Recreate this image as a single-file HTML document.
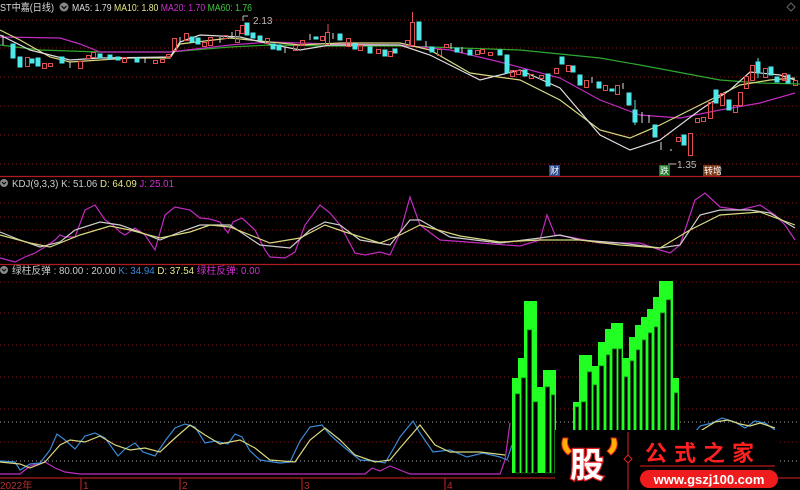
<!DOCTYPE html>
<html><head><meta charset="utf-8"><style>
html,body{margin:0;padding:0;background:#000;width:800px;height:490px;overflow:hidden}
svg{display:block}
text{font-family:"Liberation Sans","Noto Sans CJK SC",sans-serif}
</style></head><body>
<svg width="800" height="490" viewBox="0 0 800 490" xmlns="http://www.w3.org/2000/svg">
<rect width="800" height="490" fill="#000"/>
<g stroke="#801818" stroke-width="1" stroke-dasharray="1,3">
<line x1="0" y1="20" x2="800" y2="20"/><line x1="0" y1="48" x2="800" y2="48"/><line x1="0" y1="77" x2="800" y2="77"/><line x1="0" y1="106" x2="800" y2="106"/><line x1="0" y1="135" x2="800" y2="135"/><line x1="0" y1="164" x2="800" y2="164"/>
<line x1="0" y1="203" x2="800" y2="203"/><line x1="0" y1="217" x2="800" y2="217"/><line x1="0" y1="230" x2="800" y2="230"/><line x1="0" y1="243" x2="800" y2="243"/><line x1="0" y1="255" x2="800" y2="255"/>
<line x1="0" y1="282" x2="800" y2="282"/><line x1="0" y1="313" x2="800" y2="313"/><line x1="0" y1="345" x2="800" y2="345"/><line x1="0" y1="377" x2="800" y2="377"/><line x1="0" y1="409" x2="800" y2="409"/><line x1="0" y1="442" x2="800" y2="442"/>
</g>
<g stroke="#aaa" stroke-width="1" stroke-dasharray="1,3"><line x1="0" y1="422" x2="800" y2="422"/><line x1="0" y1="461" x2="800" y2="461"/></g>
<g stroke="#b01c1c" stroke-width="1.2"><line x1="0" y1="176.5" x2="800" y2="176.5"/><line x1="0" y1="264.5" x2="800" y2="264.5"/><line x1="0" y1="478" x2="800" y2="478"/>
<line x1="81" y1="478" x2="81" y2="490"/><line x1="180" y1="478" x2="180" y2="490"/><line x1="302" y1="478" x2="302" y2="490"/><line x1="445" y1="478" x2="445" y2="490"/></g>

<!-- header texts -->
<text x="0" y="11" font-size="10" fill="#ddd" textLength="54" lengthAdjust="spacingAndGlyphs">ST中嘉(日线)</text>
<circle cx="64" cy="7" r="4.5" fill="#888"/><path d="M61.5 6l2.5 2.5 2.5-2.5" stroke="#000" fill="none" stroke-width="1.2"/>
<text x="72" y="11" font-size="10" textLength="180" lengthAdjust="spacingAndGlyphs"><tspan fill="#ddd">MA5: 1.79 </tspan><tspan fill="#e6e68a">MA10: 1.80 </tspan><tspan fill="#d030d0">MA20: 1.70 </tspan><tspan fill="#3ec83e">MA60: 1.76</tspan></text>
<path d="M791 3l4 4-4 4-4-4z" stroke="#666" fill="none"/>

<!-- MAs -->
<g fill="none" stroke-width="1.2">
<polyline stroke="#2fa82f" points="0,45 40,50 100,52 170,52 230,47 270,45 330,46 400,46 520,50 600,58 640,65 720,80 760,83 800,84"/>
<polyline stroke="#c02cc0" points="0,37 60,38 80,44 100,52 170,52 230,45 270,42 330,44 400,45 450,50 500,62 560,78 600,100 640,115 680,118 720,110 760,103 795,93"/>
<polyline stroke="#d8d880" points="0,30 20,40 50,57 70,62 100,60 130,58 170,58 180,44 230,38 270,42 300,45 340,43 400,43 430,50 470,73 520,80 560,100 600,130 630,138 660,125 700,105 740,85 770,80 795,78"/>
<polyline stroke="#ddd" points="0,35 30,50 70,60 100,58 170,57 180,42 200,35 240,37 270,44 300,50 330,45 400,45 430,55 480,80 520,70 560,88 600,135 630,150 660,140 700,110 730,90 750,72 780,75 795,80"/>
</g>
<!-- candles -->
<g stroke-width="1">
<g fill="#4ee8e8" stroke="#4ee8e8">
<rect x="11" y="44" width="4" height="14"/><rect x="18" y="57" width="4" height="10"/><rect x="30" y="59" width="4" height="4"/><rect x="36" y="58" width="4" height="8"/><rect x="60" y="57" width="4" height="6"/><rect x="98" y="54" width="4" height="4"/><rect x="108" y="55" width="4" height="4"/><rect x="116" y="57" width="4" height="3"/><rect x="135" y="58" width="4" height="4"/><rect x="190" y="37" width="4" height="5"/><rect x="196" y="38" width="4" height="6"/><rect x="245" y="23" width="4" height="12"/><rect x="251" y="33" width="4" height="5"/><rect x="258" y="36" width="4" height="4"/><rect x="271" y="44" width="4" height="5"/><rect x="277" y="45" width="4" height="5"/><rect x="314" y="37" width="4" height="2"/><rect x="338" y="34" width="4" height="6"/><rect x="353" y="44" width="4" height="5"/><rect x="368" y="47" width="4" height="6"/><rect x="383" y="50" width="4" height="6"/><rect x="393" y="49" width="4" height="4"/>
<rect x="417" y="22" width="4" height="18"/><rect x="430" y="47" width="4" height="5"/><rect x="455" y="48" width="4" height="4"/><rect x="468" y="50" width="4" height="5"/><rect x="498" y="50" width="4" height="5"/><rect x="505" y="55" width="4" height="18"/><rect x="523" y="70" width="4" height="6"/><rect x="546" y="74" width="4" height="12"/><rect x="560" y="57" width="4" height="7"/><rect x="571" y="66" width="4" height="6"/><rect x="578" y="75" width="4" height="10"/><rect x="597" y="82" width="4" height="6"/><rect x="610" y="89" width="4" height="2"/><rect x="627" y="93" width="4" height="12"/><rect x="633" y="110" width="4" height="12"/><rect x="653" y="125" width="4" height="12"/><rect x="682" y="135" width="4" height="10"/><rect x="714" y="90" width="4" height="13"/><rect x="727" y="100" width="4" height="10"/><rect x="756" y="62" width="4" height="11"/><rect x="769" y="67" width="4" height="8"/><rect x="775" y="77" width="4" height="5"/><rect x="786" y="75" width="4" height="8"/>
<line x1="758" y1="58" x2="758" y2="78"/><line x1="635" y1="100" x2="635" y2="125"/>
</g>
<g fill="none" stroke="#e05050">
<rect x="25.5" y="57.5" width="4" height="9"/><rect x="42.5" y="63.5" width="4" height="5"/><rect x="48.5" y="63.5" width="4" height="3"/><rect x="78.5" y="61.5" width="4" height="7"/><rect x="86.5" y="55.5" width="4" height="3"/><rect x="91.5" y="52.5" width="4" height="5"/><rect x="122.5" y="57.5" width="4" height="5"/><rect x="153.5" y="60.5" width="4" height="3"/><rect x="160.5" y="59.5" width="4" height="3"/><rect x="166.5" y="54.5" width="4" height="3"/><rect x="172.5" y="38.5" width="4" height="12"/><rect x="184.5" y="33.5" width="4" height="7"/><rect x="202.5" y="42.5" width="4" height="4"/><rect x="208.5" y="37.5" width="4" height="8"/><rect x="223.5" y="35.5" width="4" height="3"/><rect x="235.5" y="30.5" width="4" height="12"/><rect x="240.5" y="25.5" width="4" height="8"/><rect x="265.5" y="38.5" width="4" height="5"/><rect x="293.5" y="45.5" width="4" height="5"/><rect x="300.5" y="40.5" width="4" height="5"/><rect x="320.5" y="36.5" width="4" height="4"/><rect x="325.5" y="32.5" width="4" height="12"/><rect x="346.5" y="38.5" width="4" height="8"/><rect x="358.5" y="45.5" width="4" height="5"/><rect x="376.5" y="49.5" width="4" height="4"/><rect x="388.5" y="51.5" width="4" height="5"/>
<rect x="405.5" y="40.5" width="4" height="5"/><rect x="410.5" y="22.5" width="4" height="23"/><rect x="437.5" y="49.5" width="4" height="6"/><rect x="444.5" y="44.5" width="4" height="3"/><rect x="475.5" y="50.5" width="4" height="4"/><rect x="480.5" y="49.5" width="4" height="4"/><rect x="488.5" y="52.5" width="4" height="3"/><rect x="510.5" y="70.5" width="4" height="6"/><rect x="516.5" y="70.5" width="4" height="4"/><rect x="529.5" y="74.5" width="4" height="4"/><rect x="539.5" y="75.5" width="4" height="3"/><rect x="554.5" y="68.5" width="4" height="5"/><rect x="566.5" y="65.5" width="4" height="6"/><rect x="584.5" y="80.5" width="4" height="7"/><rect x="603.5" y="85.5" width="4" height="5"/><rect x="615.5" y="85.5" width="4" height="9"/><rect x="676.5" y="137.5" width="4" height="4"/><rect x="688.5" y="133.5" width="4" height="22"/><rect x="695.5" y="118.5" width="4" height="4"/><rect x="701.5" y="117.5" width="4" height="4"/><rect x="708.5" y="102.5" width="4" height="16"/><rect x="720.5" y="93.5" width="4" height="12"/><rect x="733.5" y="105.5" width="4" height="7"/><rect x="738.5" y="92.5" width="4" height="13"/><rect x="744.5" y="76.5" width="4" height="12"/><rect x="750.5" y="65.5" width="4" height="15"/><rect x="763.5" y="68.5" width="4" height="9"/><rect x="782.5" y="73.5" width="4" height="7"/><rect x="793.5" y="80.5" width="4" height="5"/>
<line x1="412.5" y1="12" x2="412.5" y2="22"/><line x1="328" y1="24" x2="328" y2="32"/>
</g>
<g stroke="#ddd"><line x1="3" y1="35" x2="3" y2="45"/><line x1="70" y1="62" x2="70" y2="68"/><line x1="145" y1="57" x2="145" y2="63"/><line x1="180" y1="37" x2="180" y2="43"/><line x1="220" y1="37" x2="220" y2="43"/><line x1="232" y1="32" x2="232" y2="38"/><line x1="285" y1="47" x2="285" y2="53"/><line x1="310" y1="34" x2="310" y2="40"/><line x1="333" y1="33" x2="333" y2="39"/><line x1="426" y1="41" x2="426" y2="47"/><line x1="451" y1="43" x2="451" y2="49"/><line x1="462" y1="47" x2="462" y2="53"/><line x1="592" y1="77" x2="592" y2="83"/><line x1="623" y1="83" x2="623" y2="89"/><line x1="642" y1="112" x2="642" y2="123"/><line x1="649" y1="115" x2="649" y2="123"/><line x1="661" y1="142" x2="661" y2="150"/><line x1="671" y1="149" x2="671" y2="151"/></g>
</g>
<text x="253" y="24" font-size="10" fill="#bbb">2.13</text><path d="M243 16l5 0M243 16l0 5" stroke="#bbb"/>
<text x="677" y="168" font-size="10" fill="#bbb">1.35</text><line x1="668" y1="164" x2="676" y2="164" stroke="#bbb"/>
<rect x="549" y="165" width="11" height="11" fill="#2a4a8a"/><text x="550" y="174" font-size="9" fill="#fff">财</text>
<rect x="659" y="165" width="11" height="11" fill="#1a7a2a"/><text x="660" y="174" font-size="9" fill="#fff">跌</text>
<rect x="703" y="165" width="17" height="11" fill="#7a3a1a"/><text x="704" y="174" font-size="9" fill="#fff">转增</text>

<!-- KDJ -->
<circle cx="4" cy="183" r="4" fill="#888"/><path d="M2 182l2 2 2-2" stroke="#000" fill="none"/>
<text x="12" y="187" font-size="10" textLength="162" lengthAdjust="spacingAndGlyphs"><tspan fill="#ccc">KDJ(9,3,3)  K: 51.06 </tspan><tspan fill="#e6e68a">D: 64.09 </tspan><tspan fill="#d030d0">J: 25.01</tspan></text>
<g fill="none" stroke-width="1.2">
<polyline stroke="#c02cc0" points="0,258 15,262 25,257 35,253 45,247 55,240 60,235 65,237 75,237 85,210 95,205 105,220 113,225 120,232 125,235 135,228 145,235 155,250 165,215 175,207 190,210 200,218 210,219 220,222 228,233 233,222 242,218 255,230 265,250 270,257 285,258 295,252 305,225 320,205 330,213 340,225 355,253 365,255 380,252 390,255 400,233 410,197 420,225 440,240 480,243 520,246 540,240 547,215 555,235 570,237 600,243 640,243 660,250 670,253 680,245 695,200 705,193 720,207 740,210 760,205 775,215 785,225 795,240"/>
<polyline stroke="#ccc" points="0,232 20,240 40,247 60,242 75,230 100,222 120,225 140,232 160,240 180,232 200,225 230,225 260,245 290,248 310,230 325,222 340,225 360,240 390,245 410,220 420,220 450,237 500,243 540,238 560,235 580,240 620,243 660,248 680,245 700,215 720,210 750,210 770,213 795,228"/>
<polyline stroke="#d8d880" points="0,235 30,243 50,247 80,235 110,226 130,230 160,238 190,232 210,225 230,227 270,243 300,238 325,225 345,232 380,243 400,235 420,225 460,236 500,242 540,240 580,240 620,245 660,248 690,230 720,215 760,212 795,225"/>
</g>

<!-- bottom panel header -->
<circle cx="4" cy="270" r="4" fill="#888"/><path d="M2 269l2 2 2-2" stroke="#000" fill="none"/>
<text x="12" y="274" font-size="10" textLength="248" lengthAdjust="spacingAndGlyphs"><tspan fill="#ccc">绿柱反弹 : 80.00 : 20.00 </tspan><tspan fill="#3a8ad8">K: 34.94 </tspan><tspan fill="#e6e68a">D: 37.54 </tspan><tspan fill="#d030d0">绿柱反弹: 0.00</tspan></text>

<g fill="none" stroke-width="1.2">
<polyline stroke="#c02cc0" points="0,474 20,474 30,466 45,462 55,468 65,472 80,474 365,474 372,468 380,471 390,466 400,470 410,474 500,474 505,460 510,423"/>
<polyline stroke="#3a8ad8" points="0,461 15,462 20,470 30,464 40,463 50,450 57,434 65,440 75,449 85,436 95,433 105,438 118,456 125,449 135,443 143,452 155,456 165,441 175,428 185,424 195,427 205,443 215,441 228,444 235,434 242,437 250,451 260,460 280,463 290,462 300,441 310,427 322,425 330,435 345,448 360,460 375,461 385,463 395,446 400,437 413,421 420,433 433,452 450,450 467,457 483,453 500,457 507,460 512,445"/>
<polyline stroke="#d8d880" points="0,462 20,464 30,468 45,462 60,445 70,440 85,442 100,436 115,445 130,450 145,448 160,452 175,438 190,425 205,435 220,444 240,440 255,448 270,460 295,462 310,440 325,428 340,440 355,455 375,462 390,460 400,448 420,425 435,445 450,452 480,452 505,455"/>
<polyline stroke="#3a8ad8" points="690,438 700,426 712,423 722,418 735,422 745,428 755,421 765,423 775,430"/>
<polyline stroke="#d8d880" points="690,440 702,430 715,422 728,420 740,424 750,426 760,423 775,428"/>
</g>

<!-- green bars -->
<g fill="#22ff22">
<rect x="512" y="378" width="7" height="95"/><rect x="518" y="358" width="7" height="115"/><rect x="524" y="301" width="13" height="172"/><rect x="537" y="387" width="6" height="86"/><rect x="543" y="370" width="13" height="103"/>
<rect x="573" y="402" width="7" height="71"/><rect x="579" y="355" width="13" height="118"/><rect x="592" y="366" width="6" height="107"/><rect x="598" y="342" width="7" height="131"/><rect x="605" y="329" width="6" height="144"/><rect x="611" y="323" width="12" height="150"/><rect x="623" y="358" width="6" height="115"/><rect x="629" y="337" width="6" height="136"/><rect x="635" y="325" width="6" height="148"/><rect x="641" y="317" width="6" height="156"/><rect x="647" y="309" width="6" height="164"/><rect x="653" y="297" width="6" height="176"/><rect x="659" y="281" width="14" height="192"/><rect x="673" y="378" width="6" height="95"/>
</g>
<g fill="#000" stroke="#0c6a0c" stroke-width="0.8">
<rect x="515.5" y="394" width="4" height="79"/><rect x="521.5" y="378" width="4" height="95"/><rect x="527.5" y="330" width="4" height="143"/><rect x="533.5" y="402" width="4" height="71"/><rect x="545.5" y="387" width="4" height="86"/><rect x="551.5" y="395" width="3" height="78"/>
<rect x="575.5" y="407" width="3" height="66"/><rect x="581.5" y="402" width="4" height="71"/><rect x="587.5" y="372" width="4" height="101"/><rect x="593.5" y="385" width="3" height="88"/><rect x="599.5" y="366" width="4" height="107"/><rect x="606.5" y="355" width="3" height="118"/><rect x="612.5" y="349" width="4" height="124"/><rect x="618.5" y="349" width="3" height="124"/><rect x="624.5" y="377" width="3" height="96"/><rect x="630.5" y="361" width="3" height="112"/><rect x="636.5" y="350" width="3" height="123"/><rect x="642.5" y="340" width="3" height="133"/><rect x="648.5" y="333" width="3" height="140"/><rect x="654.5" y="327" width="3" height="146"/><rect x="660.5" y="313" width="4" height="160"/><rect x="666.5" y="300" width="4" height="173"/><rect x="674.5" y="393" width="3" height="80"/>
</g>

<!-- axis labels -->
<text x="0" y="489" font-size="10" fill="#b03030">2022年</text>
<text x="83" y="489" font-size="10" fill="#b03030">1</text>
<text x="182" y="489" font-size="10" fill="#b03030">2</text>
<text x="304" y="489" font-size="10" fill="#b03030">3</text>
<text x="447" y="489" font-size="10" fill="#b03030">4</text>

<!-- watermark -->
<rect x="555" y="430" width="223" height="60" fill="#000"/>
<path d="M563 438q-4 10 5 17l4-4q-6-5-4-13z" fill="#ffb000" stroke="#e02020"/>
<path d="M616 438q4 10-5 17l-4-4q6-5 4-13z" fill="#ffb000" stroke="#e02020"/>
<text x="570" y="477" font-size="34" font-weight="bold" fill="#fff" stroke="#e02020" stroke-width="2.5" paint-order="stroke" font-family="'Noto Sans CJK SC',sans-serif">股</text>
<line x1="628" y1="432" x2="628" y2="490" stroke="#e02020"/>
<path d="M628 455l4 4-4 4-4-4z" fill="#000" stroke="#e02020"/>
<text x="645" y="461" font-size="22" font-weight="bold" fill="#ff2020" letter-spacing="7" font-family="'Noto Sans CJK SC',sans-serif">公式之家</text>
<line x1="640" y1="466" x2="775" y2="466" stroke="#e02020"/>
<rect x="640" y="470" width="138" height="18" rx="9" fill="#ee1c1c"/>
<text x="709" y="484" font-size="13" font-weight="bold" fill="#fff" text-anchor="middle">www.gszj100.com</text>
</svg>
</body></html>
